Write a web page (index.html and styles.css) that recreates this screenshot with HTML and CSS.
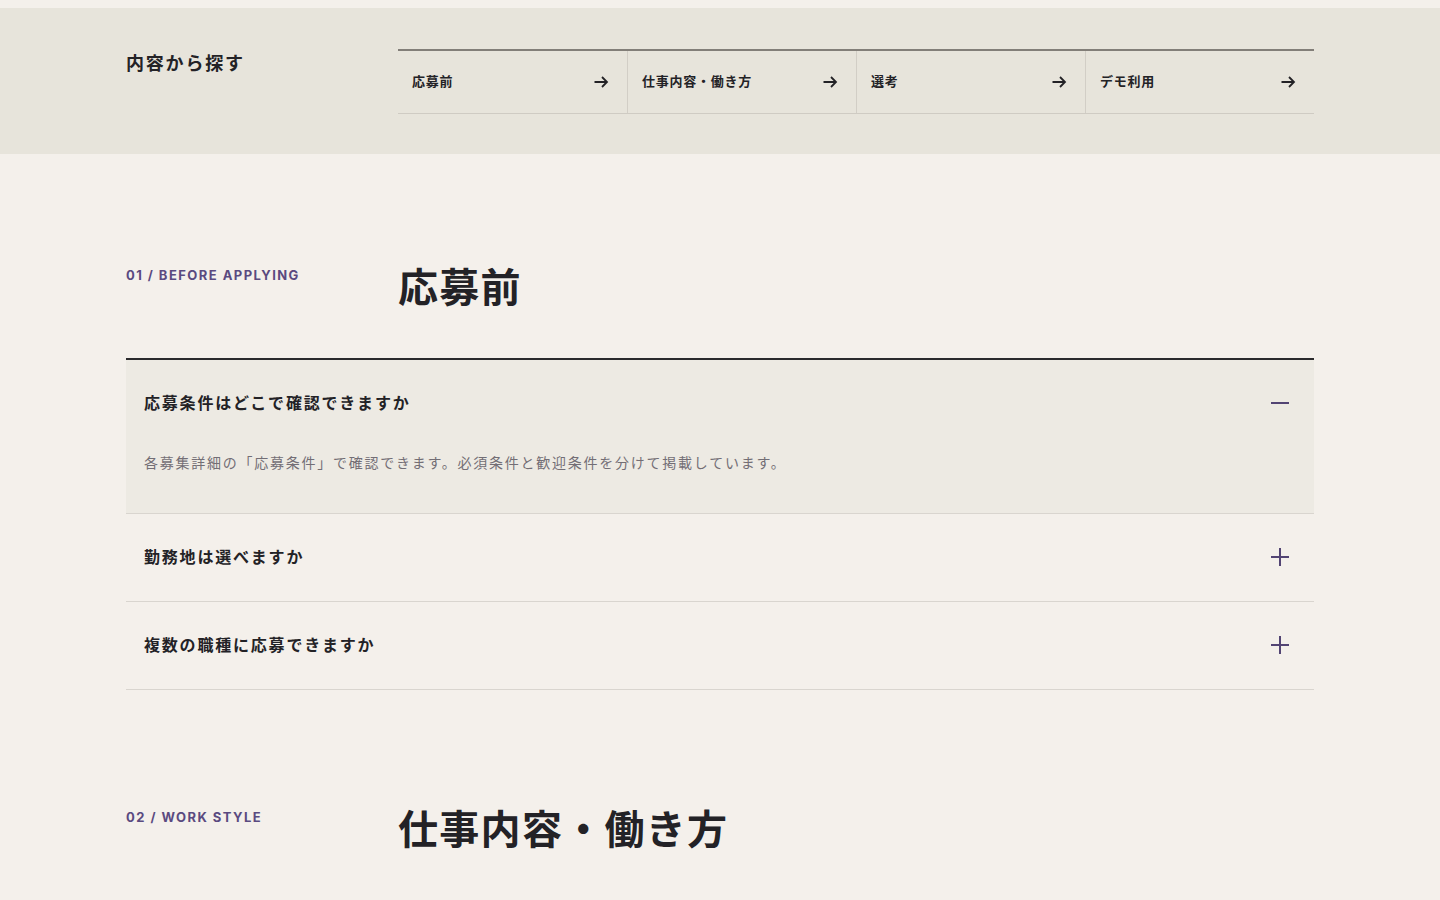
FILE: index.html
```html
<!DOCTYPE html>
<html lang="ja">
<head>
<meta charset="utf-8">
<title>FAQ</title>
<link rel="stylesheet" href="styles.css">
</head>
<body>
<div class="band">
  <div class="container band-grid">
    <h2 class="band-title">内容から探す</h2>
    <nav class="nav">
      <a class="nav-item" href="#s1"><span>応募前</span><svg class="arrow" viewBox="0 0 16 16"><path d="M1.5 8H14M9 3l5 5-5 5"/></svg></a>
      <a class="nav-item" href="#s2"><span>仕事内容・働き方</span><svg class="arrow" viewBox="0 0 16 16"><path d="M1.5 8H14M9 3l5 5-5 5"/></svg></a>
      <a class="nav-item" href="#s3"><span>選考</span><svg class="arrow" viewBox="0 0 16 16"><path d="M1.5 8H14M9 3l5 5-5 5"/></svg></a>
      <a class="nav-item" href="#s4"><span>デモ利用</span><svg class="arrow" viewBox="0 0 16 16"><path d="M1.5 8H14M9 3l5 5-5 5"/></svg></a>
    </nav>
  </div>
</div>
<main class="main">
  <section class="section container" id="s1">
    <div class="section-head">
      <p class="label">01 / BEFORE APPLYING</p>
      <h2 class="heading">応募前</h2>
    </div>
    <div class="faq">
      <div class="item open">
        <button class="q"><span>応募条件はどこで確認できますか</span><svg class="icon" viewBox="0 0 18 18"><path d="M0 9h18"/></svg></button>
        <div class="a">各募集詳細の「応募条件」で確認できます。必須条件と歓迎条件を分けて掲載しています。</div>
      </div>
      <div class="item">
        <button class="q"><span>勤務地は選べますか</span><svg class="icon" viewBox="0 0 18 18"><path d="M0 9h18M9 0v18"/></svg></button>
      </div>
      <div class="item">
        <button class="q"><span>複数の職種に応募できますか</span><svg class="icon" viewBox="0 0 18 18"><path d="M0 9h18M9 0v18"/></svg></button>
      </div>
    </div>
  </section>
  <section class="section container" id="s2">
    <div class="section-head">
      <p class="label">02 / WORK STYLE</p>
      <h2 class="heading">仕事内容・働き方</h2>
    </div>
  </section>
</main>
</body>
</html>
```
FILE: styles.css
```css
* { box-sizing: border-box; }
html, body { margin: 0; padding: 0; }
body {
  background: #f4f0eb;
  color: #232226;
  font-family: "Noto Sans CJK JP", "Noto Sans", sans-serif;
  padding-top: 8px;
}
.container {
  width: 1188px;
  margin: 0 auto;
}
.band {
  background: #e7e4db;
  padding: 41px 0 40px;
}
.band-grid {
  display: grid;
  grid-template-columns: 272px 1fr;
  align-items: start;
}
.band-title {
  margin: 0;
  font-size: 18px;
  line-height: 27px;
  font-weight: 700;
  letter-spacing: 1.8px;
  color: #232226;
}
.nav {
  display: grid;
  grid-template-columns: repeat(4, 1fr);
  border-top: 2px solid #827e78;
  border-bottom: 1px solid #cfcbc3;
}
.nav-item {
  display: flex;
  align-items: center;
  justify-content: space-between;
  height: 62px;
  padding: 0 18px 3px 14px;
  font-size: 13px;
  font-weight: 700;
  letter-spacing: 0.75px;
  color: #232226;
  text-decoration: none;
  border-left: 1px solid #d2cec6;
}
.nav-item:first-child { border-left: none; }
.arrow {
  width: 16px;
  height: 16px;
  margin-top: 2px;
  fill: none;
  stroke: #232226;
  stroke-width: 1.8;
}
.main { padding-top: 51px; }
.section { padding: 56px 0 57px; }
.section-head {
  display: grid;
  grid-template-columns: 272px 1fr;
  align-items: start;
}
.label {
  margin: 4px 0 0;
  font-family: "Inter", "Noto Sans", sans-serif;
  font-size: 13px;
  line-height: 20px;
  font-weight: 700;
  letter-spacing: 1.45px;
  color: #5a4a80;
}
.heading {
  margin: 0;
  font-size: 40px;
  line-height: 48px;
  font-weight: 700;
  letter-spacing: 1.3px;
  color: #232226;
}
.faq {
  margin-top: 49px;
  border-top: 2px solid #2a2a2c;
}
.item {
  border-bottom: 1px solid #d9d5cf;
}
.item.open { background: #edeae3; }
.q {
  display: flex;
  align-items: center;
  justify-content: space-between;
  width: 100%;
  padding: 30px 25px 33px 18px;
  background: none;
  border: none;
  font-family: inherit;
  font-size: 16px;
  line-height: 24px;
  font-weight: 700;
  letter-spacing: 1.8px;
  color: #232226;
  text-align: left;
  cursor: pointer;
}
.icon {
  width: 18px;
  height: 18px;
  margin-top: 2px;
  fill: none;
  stroke: #524473;
  stroke-width: 2;
}
.a {
  padding: 3px 18px 38px;
  font-size: 14px;
  line-height: 25px;
  letter-spacing: 1.75px;
  color: #736e75;
}
```
